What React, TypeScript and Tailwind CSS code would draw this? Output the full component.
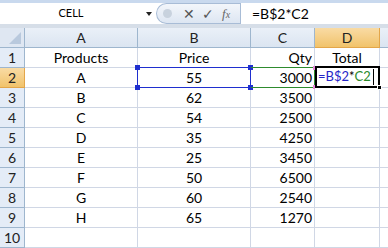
import React from 'react';

const ROWS = [
  ['Products', 'Price', 'Qty', 'Total'],
  ['A', '55', '3000', ''],
  ['B', '62', '3500', ''],
  ['C', '54', '2500', ''],
  ['D', '35', '4250', ''],
  ['E', '25', '3450', ''],
  ['F', '50', '6500', ''],
  ['G', '60', '2540', ''],
  ['H', '65', '1270', ''],
  ['', '', '', ''],
];

const font = { fontFamily: 'Lato, "Liberation Sans", sans-serif' };

const Handle = ({ className }: { className: string }) => (
  <div className={`absolute w-[5px] h-[5px] ${className}`} />
);

const FormulaBar = () => (
  <div className="h-[28px] flex flex-col bg-[#c9d9ee]">
    <div className="h-[3px]" />
    <div className="h-[21px] flex bg-white">
      <div className="w-[156px] flex items-center relative">
        <span className="flex-1 text-center text-[11px] text-black pr-[14px]">CELL</span>
        <span className="absolute left-[146px] top-[9px] w-0 h-0 border-l-[3px] border-r-[3px] border-t-[4px] border-l-transparent border-r-transparent border-t-[#222]" />
      </div>
      <div className="w-[84px] flex items-center bg-gradient-to-b from-[#f3f6fb] to-[#dde6f2] rounded-l-[11px] border border-[#a8bcd6] border-r-0">
        <span className="ml-[6px] w-[9px] h-[9px] rounded-full bg-[#c8d2de]" />
        <span className="ml-[11px] text-[14px] text-[#555]">✕</span>
        <span className="ml-[7px] text-[14px] text-[#555]">✓</span>
        <span className="ml-[8px] text-[13px] italic text-[#666]" style={{ fontFamily: '"Liberation Serif", serif' }}>
          f<span className="text-[10px]">x</span>
        </span>
      </div>
      <div className="flex-1 flex items-center border-l border-[#a8bcd6] pl-[11px] text-[14px] text-black">=B$2*C2</div>
    </div>
    <div className="h-[4px] bg-[#d6dee8]" />
  </div>
);

const colW = ['w-[113px]', 'w-[113px]', 'w-[64px]', 'w-[65px]'];
const align = ['justify-center', 'justify-center', 'justify-end pr-[2px]', 'justify-center'];

export default function App() {
  return (
    <div className="w-[388px] h-[248px] overflow-hidden bg-white relative" style={font}>
      <FormulaBar />
      <div className="flex h-[20px]">
        <div className="w-[25px] border-r border-b border-[#9eb6ce] bg-[#dfe7f2] relative">
          <svg className="absolute right-[3px] bottom-[3px]" width="12" height="12"><polygon points="12,0 12,12 0,12" fill="#b9c9dd" /></svg>
        </div>
        {['A', 'B', 'C', 'D'].map((c, i) => (
          <div
            key={c}
            className={`${colW[i]} flex items-center justify-center border-r border-b text-[14px] ${
              c === 'D'
                ? 'bg-gradient-to-b from-[#f9dba4] to-[#f1c36a] border-[#e3a64a] text-[#222]'
                : 'bg-gradient-to-b from-[#eaf0f8] to-[#dbe5f1] border-[#9eb6ce] text-[#222]'
            }`}
          >
            {c}
          </div>
        ))}
        <div className="flex-1 border-b border-[#9eb6ce] bg-gradient-to-b from-[#eaf0f8] to-[#dbe5f1]" />
      </div>
      {ROWS.map((r, ri) => (
        <div key={ri} className="flex h-[20px]">
          <div
            className={`w-[25px] flex items-center justify-center border-r border-b text-[14px] ${
              ri === 1
                ? 'bg-gradient-to-b from-[#f9dba4] to-[#f1c36a] border-[#e3a64a] text-[#222]'
                : 'bg-[#e4ecf7] border-[#9eb6ce] text-[#222]'
            }`}
          >
            {ri + 1}
          </div>
          {r.map((v, ci) => (
            <div
              key={ci}
              className={`${colW[ci]} flex items-center ${align[ci]} border-r border-b border-[#d0d7e5] text-[14px] text-black`}
            >
              {v}
            </div>
          ))}
          <div className="flex-1 border-b border-[#d0d7e5]" />
        </div>
      ))}

      {/* B2 reference box */}
      <div className="absolute left-[137px] top-[67px] w-[114px] h-[21px] border border-[#1f2fcf]" />
      <Handle className="left-[135px] top-[65px] bg-[#1f2fcf]" />
      <Handle className="left-[135px] top-[85px] bg-[#1f2fcf]" />
      <Handle className="left-[248px] top-[65px] bg-[#1f2fcf]" />
      <Handle className="left-[248px] top-[85px] bg-[#1f2fcf]" />
      {/* C2 reference box */}
      <div className="absolute left-[251px] top-[67px] w-[64px] h-[21px] border border-[#2e8b2e] border-l-0" />
      <div className="absolute left-[313px] top-[66px] w-[2px] h-[4px] bg-[#e58ad8]" />
      <div className="absolute left-[313px] top-[85px] w-[2px] h-[4px] bg-[#e58ad8]" />
      {/* D2 active cell */}
      <div className="absolute left-[315px] top-[66px] w-[65px] h-[22px] border-2 border-black bg-white flex items-center pl-[1px] text-[13px]">
        <span className="text-[#2525c8]">=B$2</span>
        <span className="text-black">*</span>
        <span className="text-[#2a8a2a]">C2</span>
        <span className="ml-[2px] w-px h-[16px] bg-black" />
      </div>
      <div className="absolute left-[377px] top-[85px] w-[5px] h-[5px] bg-black border border-white" />
    </div>
  );
}
